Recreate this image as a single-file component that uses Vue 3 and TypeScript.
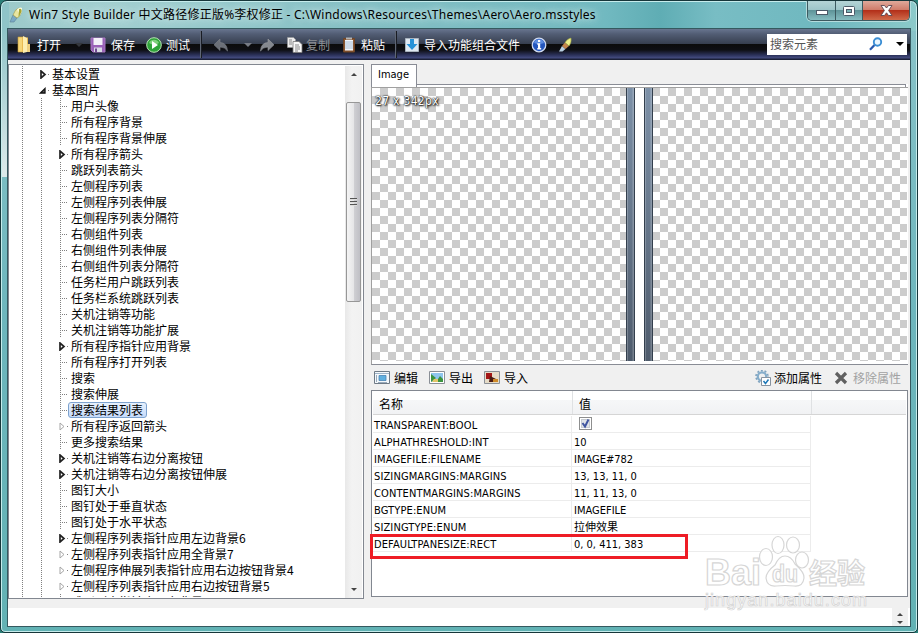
<script setup lang="ts">
type Kind = 'leaf' | 'full' | 'empty'
interface Node { label: string; kind: Kind; selected?: boolean }
interface Prop { name: string; value: string; check?: boolean }

const leaf = (label: string): Node => ({ label, kind: 'leaf' })
const full = (label: string): Node => ({ label, kind: 'full' })
const empty = (label: string): Node => ({ label, kind: 'empty' })

const nodes: Node[] = [
  leaf('用户头像'), leaf('所有程序背景'), leaf('所有程序背景伸展'), full('所有程序箭头'),
  leaf('跳跃列表箭头'), leaf('左侧程序列表'), leaf('左侧程序列表伸展'), leaf('左侧程序列表分隔符'),
  leaf('右侧组件列表'), leaf('右侧组件列表伸展'), leaf('右侧组件列表分隔符'),
  leaf('任务栏用户跳跃列表'), leaf('任务栏系统跳跃列表'), leaf('关机注销等功能'),
  leaf('关机注销等功能扩展'), full('所有程序指针应用背景'), leaf('所有程序打开列表'),
  leaf('搜索'), leaf('搜索伸展'), { label: '搜索结果列表', kind: 'leaf', selected: true },
  empty('所有程序返回箭头'), leaf('更多搜索结果'), full('关机注销等右边分离按钮'),
  full('关机注销等右边分离按钮伸展'), leaf('图钉大小'), leaf('图钉处于垂直状态'),
  leaf('图钉处于水平状态'), full('左侧程序列表指针应用左边背景6'),
  empty('左侧程序列表指针应用全背景7'), empty('左侧程序伸展列表指针应用右边按钮背景4'),
  empty('左侧程序列表指针应用右边按钮背景5'), leaf('跳跃列表指针应用右背景'),
]

const props: Prop[] = [
  { name: 'TRANSPARENT:BOOL', value: '', check: true },
  { name: 'ALPHATHRESHOLD:INT', value: '10' },
  { name: 'IMAGEFILE:FILENAME', value: 'IMAGE#782' },
  { name: 'SIZINGMARGINS:MARGINS', value: '13, 13, 11, 0' },
  { name: 'CONTENTMARGINS:MARGINS', value: '11, 11, 13, 0' },
  { name: 'BGTYPE:ENUM', value: 'IMAGEFILE' },
  { name: 'SIZINGTYPE:ENUM', value: '拉伸效果' },
  { name: 'DEFAULTPANESIZE:RECT', value: '0, 0, 411, 383' },
]
</script>

<template>
  <div class="window">
    <header class="titlebar">
      <svg class="app-icon" width="16" height="18" viewBox="0 0 16 18">
        <path d="M1 16 L4 9 L8 12 L5 16z" fill="#7aa9c4" stroke="#5d7f95" stroke-width=".6" />
        <path d="M4 9 Q6 3 10 2 L12 7 Q11 11 8 12z" fill="#e9e6a0" stroke="#93934a" stroke-width=".6" />
        <path d="M8 3.500 Q11 .5 13 2 Q13.500 6 11 9z" fill="#fdfde0" />
        <path d="M10 3 Q13 2 12.500 6 L9.500 11z" fill="#a6a432" />
      </svg>
      <h1>Win7 Style Builder 中文路径修正版%李权修正 - C:\Windows\Resources\Themes\Aero\Aero.msstyles</h1>
      <div class="caption">
        <span class="cap min"><svg width="12" height="6"><rect x=".5" y=".5" width="11" height="4" fill="#fff" stroke="#4c5a68" /></svg></span>
        <span class="cap max"><svg width="12" height="10"><rect x=".5" y=".5" width="11" height="9" rx="1" fill="#fff" stroke="#4c5a68" /><rect x="3.500" y="3.500" width="5" height="3" fill="#7cb4b8" stroke="#4c5a68" /></svg></span>
        <span class="cap close"><svg width="13" height="11" viewBox="0 0 13 11"><path d="M1 .5h3.500l2 2.500 2-2.500H12L8.600 5.500 12 10.500H8.500l-2-2.700-2 2.700H1l3.400-5z" fill="#fff" stroke="#5b4650" stroke-width=".9" /></svg></span>
      </div>
    </header>

    <div class="client">
      <nav class="toolbar">
        <span class="tool"><svg width="16" height="17" viewBox="0 0 16 17">
          <path d="M2 1h5v15H2z" fill="#f6d678" stroke="#c89b36" stroke-width=".6" /><path d="M6 1.500h6v14H6z" fill="#e9bb52" /><path d="M7 0l4 2v14l-4 1z" fill="#fdeeb0" /><path d="M11 8h3v8h-3z" fill="#efd080" />
        </svg><b>打开</b><i class="caret dim"></i></span>
        <span class="tool"><svg width="16" height="16" viewBox="0 0 16 16">
          <path d="M1 1h14v14H3L1 13z" fill="#9a62b8" stroke="#a678c0" /><path d="M3.500 1h9v7h-9z" fill="#f3f1f8" /><path d="M4 10.500h8V15H4z" fill="#d9dbe6" /><path d="M5 11.500h2V15H5z" fill="#6f4a90" />
        </svg><b>保存</b></span>
        <span class="tool test"><svg width="16" height="16" viewBox="0 0 16 16">
          <circle cx="8" cy="8" r="7.300" fill="#2fa339" stroke="#b7e2b5" /><path d="M3 6a5.500 5.500 0 0 1 10 0q-5 3-10 0z" fill="#7ed07b" /><path d="M6 4l6 4-6 4z" fill="#fff" />
        </svg><b>测试</b></span>
        <span class="sep"></span>
        <span class="tool"><svg width="16" height="14" viewBox="0 0 16 14"><path d="M7 1v3.500q7 .2 7.500 8.500-2.500-4-7.500-4v3.500L1 6.800z" fill="#6c7078" stroke="#83868d" stroke-width=".6" /></svg></span>
        <span class="tool"><i class="caret"></i></span>
        <span class="tool"><svg width="16" height="14" viewBox="0 0 16 14"><path d="M9 1v3.500Q2 4.700 1.500 13 4 9 9 9v3.500l6-5.700z" fill="#85898f" stroke="#9a9da3" stroke-width=".6" /></svg></span>
        <span class="tool copy"><svg width="16" height="16" viewBox="0 0 16 16">
          <path d="M.5.500h6l2 2v8h-8z" fill="#eee" stroke="#999" stroke-width=".6" /><path d="M6 4.500h6l3 3v8H6z" fill="#f8f8f8" stroke="#777" stroke-width=".8" /><path d="M2 3h3M2 5h3M2 7h3M8 8h4M8 10h5M8 12h5M8 14h3" stroke="#888" />
        </svg><b>复制</b></span>
        <span class="tool paste"><svg width="16" height="16" viewBox="0 0 16 16">
          <path d="M2.500 1.500h11V15h-11z" fill="#8a5630" stroke="#6e4426" /><path d="M4 3h8v10.500H4z" fill="#f2f6fb" /><path d="M5 0.500h6v2H5z" fill="#b4b4b4" /><path d="M4 5h8M4 7h8M4 9h8M4 11h8" stroke="#a9bdd2" />
        </svg><b>粘贴</b></span>
        <span class="sep"></span>
        <span class="tool import"><svg width="16" height="16" viewBox="0 0 16 16">
          <path d="M1.500 1.500h13v13h-13z" fill="#dfe9f2" stroke="#aab4be" /><path d="M6 2h4v5h3.500L8 13 2.500 7H6z" fill="#2692d8" />
        </svg><b>导入功能组合文件</b></span>
        <span class="tool"><svg width="16" height="16" viewBox="0 0 16 16">
          <circle cx="8" cy="8" r="6.800" fill="#2456bd" stroke="#cfdaf0" stroke-width="1.300" /><path d="M3 6a5.200 5.200 0 0 1 10 0q-5 2-10 0z" fill="#5c8ce0" /><path d="M7 3h2.200v2H7zM6.300 6.300h2.900v4.700h1V12.500H6.300V11H7V7.700h-.7z" fill="#fff" />
        </svg></span>
        <span class="tool"><svg width="16" height="16" viewBox="0 0 16 16">
          <path d="M1 14.500L4 9l3.500 3-3 2.500z" fill="#b9cfe0" /><path d="M4 9l3-3.500 4 3.500-3.500 3z" fill="#c4844c" /><path d="M7 5.500Q9.500 1.500 13 1q.8 4.500-2 8z" fill="#eef08a" stroke="#98a03c" stroke-width=".6" />
        </svg></span>
        <div class="search">
          <span>搜索元素</span>
          <svg width="14" height="14" viewBox="0 0 14 14"><path d="M1 12.800L5.500 8" stroke="#2758ae" stroke-width="2.200" /><circle cx="8.500" cy="5" r="3.700" fill="#eaf6ff" stroke="#3b8ed4" stroke-width="1.900" /></svg>
          <i class="caret black"></i>
        </div>
      </nav>

      <main class="body">
        <section class="tree">
          <ul>
            <li><span class="g wide v"></span><span class="g arrow"><svg width="8" height="9"><path d="M2 1v7l4-3.500z" fill="#fff" stroke="#222" stroke-width="1.700" /></svg><i class="dot"></i></span><em>基本设置</em></li>
            <li><span class="g wide v"></span><span class="g arrow"><svg width="8" height="9"><path d="M6 2.500v4.500H1.500z" fill="#666" stroke="#111" stroke-width="1.300" /></svg><i class="dot"></i></span><em>基本图片</em></li>
            <li v-for="n in nodes" :key="n.label">
              <span class="g wide v"></span><span class="g mid v"></span>
              <span v-if="n.kind === 'leaf'" class="g v branch"></span>
              <span v-else class="g arrow">
                <svg width="8" height="9"><path d="M2 1v7l4-3.500z" fill="#fff" :stroke="n.kind === 'full' ? '#222' : '#a6a6a6'" :stroke-width="n.kind === 'full' ? 1.7 : 1" /></svg><i class="dot"></i>
              </span>
              <em :class="{ selected: n.selected }">{{ n.label }}</em>
            </li>
          </ul>
          <div class="scroll">
            <i class="up"></i>
            <div class="thumb"><i></i><i></i><i></i></div>
            <i class="down"></i>
          </div>
        </section>

        <section class="right">
          <div class="tabs"><span class="tab">Image</span><span class="tabline"></span></div>
          <div class="preview">
            <span class="dims">27 x 342px</span>
            <div class="strip"><span></span><span></span></div>
          </div>
          <div class="actions">
            <span class="act"><svg width="16" height="13" viewBox="0 0 16 13"><path d="M.5.500h15v12H.5z" fill="#f4f8fb" stroke="#6e7a86" /><path d="M1 2.500h14" stroke="#9fb4c8" /><path d="M5 4.500h7v5H5z" fill="#5fb0e0" stroke="#4a84b4" stroke-width=".8" /><path d="M2.500 4v7M4 11.500h9" stroke="#9ab" /></svg>编辑</span>
            <span class="act"><svg width="16" height="13" viewBox="0 0 16 13"><path d="M.5.500h15v12H.5z" fill="#fff" stroke="#8a8f96" /><path d="M2 2h12v9H2z" fill="#8fc6ee" /><path d="M2 3l5 4-5 4zM7 11l4-6 3 3v3z" fill="#3c9440" /><path d="M5 8h4v3H3z" fill="#e2c668" /></svg>导出</span>
            <span class="act"><svg width="16" height="13" viewBox="0 0 16 13"><path d="M.5.500h15v12H.5z" fill="#e6dcc8" stroke="#8a8f96" /><path d="M2 2h6v6H2z" fill="#a31616" /><path d="M6 5l6 3-1 3H5z" fill="#4a1c14" /><path d="M9 8h5v3H9z" fill="#cf8a28" /></svg>导入</span>
            <span class="act add"><svg width="16" height="16" viewBox="0 0 16 16"><circle cx="7" cy="6.500" r="4.200" fill="none" stroke="#86aecb" stroke-width="2.200" /><circle cx="7" cy="6.500" r="6" fill="none" stroke="#7fa3bf" stroke-width="1.600" stroke-dasharray="2 1.770" /><path d="M6.500 7.500h9v8h-9z" fill="#fff" stroke="#8793a0" /><path d="M8.500 11l2 2.500 3-4" fill="none" stroke="#1d78b8" stroke-width="1.500" /></svg>添加属性</span>
            <span class="act off"><svg width="14" height="14" viewBox="0 0 14 14"><path d="M2 2l10 10M12 2L2 12" stroke="#606060" stroke-width="3.200" /></svg>移除属性</span>
          </div>
          <div class="grid">
            <div class="head"><span>名称</span><span>值</span><span></span></div>
            <div v-for="p in props" :key="p.name" class="row">
              <span class="name">{{ p.name }}</span>
              <span class="val"><svg v-if="p.check" width="13" height="13"><rect x=".5" y=".5" width="12" height="12" fill="#fff" stroke="#8e8f8f" /><rect x="2.500" y="2.500" width="8" height="8" fill="#dfe3e8" stroke="#c6cbd1" /><path d="M3.500 6l2.500 3.500L9.500 2.500" fill="none" stroke="#4156a0" stroke-width="2" /></svg>{{ p.value }}</span>
            </div>
            <div class="marker"></div>
          </div>
        </section>
      </main>
      <footer class="status"><div class="spin"><i class="up"></i><i class="down"></i></div></footer>
    </div>

    <div class="watermark">
      <svg width="170" height="66" viewBox="0 0 170 66">
        <g fill="#fff" fill-opacity=".75" stroke="#d6d6d6" stroke-width="1.200">
          <ellipse cx="61" cy="23" rx="6.500" ry="8.500" /><ellipse cx="73" cy="11" rx="6" ry="8.500" />
          <ellipse cx="88" cy="11" rx="6.500" ry="8" /><ellipse cx="97" cy="26" rx="6.500" ry="8" />
          <path d="M80 22q6 0 10 8 10 9 9 14-1 9-10 8-9-1-18 0-9 1-10-8 0-6 9-13 4-9 10-9z" />
          <text x="0" y="51" font-size="36" font-weight="bold" textLength="56" lengthAdjust="spacingAndGlyphs">Bai</text>
          <text x="67" y="48" font-size="23" font-weight="bold" textLength="26" lengthAdjust="spacingAndGlyphs">du</text>
          <text x="104" y="50" font-size="28" font-weight="bold" textLength="56" class="cjk">经验</text>
        </g>
        <text x="0" y="72" font-size="18" textLength="162" class="url">jingyan.baidu.com</text>
      </svg>
    </div>
  </div>
</template>

<style>
body { background: #2b7f78; overflow: hidden; }
</style>

<style scoped>
* { box-sizing: border-box; }
.window {
  position: relative; width: 918px; height: 633px; overflow: hidden;
  display: flex; flex-direction: column; padding: 0 7px 6px;
  border: 1px solid #16363a; border-radius: 7px 7px 5px 5px;
  box-shadow: inset 0 0 0 1px #c6ecec;
  background:
    linear-gradient(180deg, #8fc4c8 30px, #dce9ea 172px, #dce9ea 176px, transparent 176px) 0 0 / 8px 176px no-repeat,
    linear-gradient(90deg, #9ccaca, #a2cfd0 12%, #84bfc4 40%, #71b9c0 66%, #5fadb4 72%, #78bdc4 78%, #6fb8bf 90%, #8ccaca) 0 0 / 100% 30px no-repeat,
    linear-gradient(180deg, #8ac4c9, #6db6bd 50%, #62b2b4);
  font-family: "DejaVu Sans Condensed", "Noto Sans CJK SC", sans-serif;
  font-size: 12px; color: #000;
}
.titlebar { height: 28px; flex: none; display: flex; align-items: flex-start; }
.app-icon { margin: 5px 5px 0 1px; flex: none; }
h1 {
  margin: 3px 0 0 -1px; font: 12px/22px "Noto Sans", "Noto Sans CJK SC", sans-serif;
  white-space: nowrap; letter-spacing: .225px; color: #000;
  text-shadow: 0 0 6px #cfe8e8, 0 0 10px #cfe8e8;
}
.caption { margin: 0 0 0 auto; display: flex; height: 20px; border: 1px solid #3c5a60; border-top: 0; border-radius: 0 0 5px 5px; overflow: hidden; box-shadow: 0 0 0 1px #b5dcdd; }
.cap { display: flex; align-items: center; justify-content: center; width: 27px; border-right: 1px solid #3c5a60; background: linear-gradient(#b4d4d6, #9cc5c8 48%, #5f9499 50%, #86bcc0); }
.cap.min { width: 28px; padding-top: 5px; }
.cap.close { width: 46px; border: 0; background: linear-gradient(#dfa99b, #cf7a68 48%, #b3301a 50%, #cf6a4a); }
.client { flex: 1; display: flex; flex-direction: column; background: #f0f0f0; outline: 1px solid #35595f; min-height: 0; }
.toolbar {
  height: 31px; flex: none; padding-left: 8px; display: grid; align-items: center;
  grid-template-columns: 74px 56px 54px 13px 31px 15px 28px 54px 54px 9px 127px 27px 200px 1fr;
  background: linear-gradient(#68758f 0, #525d74 5px, #363e4e 15px, #0b0b0b 15px, #0e0f14 21px, #2b315a 26px, #444c80 29px, #1b2038 30px);
  color: #fff;
}
.tool { display: flex; align-items: center; gap: 5px; }
.tool b, .act { font: 12px/16px "Noto Sans CJK SC", sans-serif; white-space: nowrap; }
.tool b { padding-top: 1px; }
.tool.test, .tool.import, .tool.paste { gap: 4px; }
.tool.copy { gap: 3px; color: #8d9096; }
.sep { width: 2px; height: 27px; background: #5f6674; border-right: 1px solid #191c24; }
.caret { width: 0; height: 0; border: 4px solid transparent; border-top-color: #777b84; border-bottom: 0; }
.caret.dim { margin-left: 9px; border-top-color: #34373d; }
.caret.black { border-top-color: #000; }
.search { justify-self: end; width: 140px; height: 21px; margin: 0 3px 1px 0; background: #fff; color: #555; display: flex; align-items: center; padding: 0 3px; font: 12px/20px "Noto Sans CJK SC", sans-serif; }
.search svg { margin: 0 13px 0 auto; }
.body { flex: 1; display: flex; gap: 7px; padding: 4px 2px 0 0; min-height: 0; }
.tree { width: 356px; height: 535px; flex: none; border: 1px solid #828790; background: #fff; display: flex; padding: 1px 1px 0 0; }
ul { flex: 1; margin: 0; padding: 0; list-style: none; overflow: hidden; height: 531px; }
li { display: flex; height: 16px; }
.g { width: 17px; height: 16px; flex: none; background-repeat: no-repeat; }
.g.wide { width: 23px; }
.g.mid { width: 19px; }
.v { background-image: repeating-linear-gradient(180deg, #808080 0 1px, transparent 1px 2px); background-size: 1px 16px; background-position: 9px 0; }
.g.wide.v { background-position: 13px 0; }
.v.branch { background-image: repeating-linear-gradient(180deg, #808080 0 1px, transparent 1px 2px), repeating-linear-gradient(90deg, #808080 0 1px, transparent 1px 2px); background-size: 1px 16px, 8px 1px; background-position: 9px 0, 9px 8px; }
.g.arrow { display: flex; align-items: center; padding-left: 7px; }
.dot { width: 1px; height: 1px; background: #808080; margin-left: 1px; }
em { font: 12px/16px "Noto Sans CJK SC", sans-serif; padding: 0 3px; height: 16px; white-space: nowrap; }
em.selected { border: 1px solid #7da2ce; border-radius: 3px; padding: 0 3px 0 2px; line-height: 14px; background: linear-gradient(#e6f0fc, #c6dbfb); }
.scroll { width: 17px; height: 532px; display: flex; flex-direction: column; align-items: center; background: linear-gradient(90deg, #e8e8e8, #f3f3f3 40%, #f1f1f1); }
.up, .down { width: 0; height: 0; border: 4px solid transparent; }
.up { border-top: 0; border-bottom-color: #444; }
.down { border-bottom: 0; border-top-color: #444; }
.scroll .up, .scroll .down { border-left-width: 3px; border-right-width: 3px; }
.scroll .up { margin-top: 7px; border-bottom-width: 3px; }
.scroll .down { margin: auto 0 7px; border-top-width: 3px; }
.thumb { margin-top: 26px; width: 15px; height: 200px; border: 1px solid #979797; border-radius: 2px; background: linear-gradient(90deg, #f4f4f4, #e6e6e8 50%, #cfcfd3 55%, #bfbfc5); display: flex; flex-direction: column; align-items: center; justify-content: center; gap: 1px; }
.thumb i { width: 7px; height: 2px; background: linear-gradient(#555 1px, #ddd 1px); }
.right { flex: 1; min-width: 0; display: flex; flex-direction: column; }
.tabs { height: 23px; display: flex; align-items: flex-end; border-left: 1px solid #898c95; padding-right: 2px; background: linear-gradient(#fff, #fff) 0 100% / 100% 3px no-repeat; }
.tab { height: 23px; width: 45px; border: 1px solid #898c95; border-width: 1px 1px 0 0; background: #fff; font: 11px/19px "DejaVu Sans Condensed", sans-serif; padding-left: 6px; align-self: flex-start; }
.tabline { flex: 1; height: 3px; border: 1px solid #898c95; border-width: 1px 1px 0 0; }
.preview { position: relative; height: 278px; border: 1px solid #a0a0a0; border-right: 0; border-bottom-color: #898c95; padding: 0 1px 3px 0; background: repeating-conic-gradient(#ccc 0 25%, #fff 0 50%) 0 0 / 16px 16px content-box, #fff; display: flex; }
.dims { position: absolute; left: 3px; top: 5px; font: 12px/16px "DejaVu Sans Condensed", sans-serif; letter-spacing: .3px; color: #fff; text-shadow: 0 0 2px #000, 1px 1px 2px #000, 0 0 1px #000; }
.strip { width: 27px; margin-left: 254px; background: #fff; display: flex; justify-content: space-between; }
.strip span { width: 9px; border: 1px solid #333f4d; border-width: 0 1px; background: linear-gradient(90deg, rgba(255,255,255,.22) 1px, transparent 1px 5px, rgba(255,255,255,.22) 6px), linear-gradient(#7d91a8, #4e5b6c); }
.actions { height: 25px; flex: none; display: flex; align-items: center; padding: 1px 7px 1px 3px; gap: 11px; }
.act { display: flex; align-items: center; gap: 4px; }
.add { margin-left: auto; gap: 3px; }
.off { color: #a2a2a2; gap: 5px; margin-left: 1px; }
.grid { position: relative; height: 207px; border: 1px solid #828790; background: #fff; font-size: 11px; }
.head { height: 24px; display: grid; grid-template-columns: 200px 239px 1fr; margin: 0 1px 1px; border-bottom: 1px solid #d5d5d5; background: linear-gradient(#fff 9px, #f6f7f8 9px, #f1f2f4); font: 12px/26px "Noto Sans CJK SC", sans-serif; }
.head span { padding-left: 6px; height: 23px; border-right: 1px solid #dfe1e3; }
.head span:last-child { border: 0; }
.row { height: 17px; width: 438px; margin-left: 1px; display: grid; grid-template-columns: 199px 239px; line-height: 19px; letter-spacing: .12px; }
.row span { border: 1px solid #ececec; border-width: 0 1px 1px 0; padding-left: 1px; white-space: nowrap; height: 17px; }
.row .val { padding-left: 2px; letter-spacing: 0; }
.row svg { display: block; margin: 1px 0 0 5px; }
.marker { position: absolute; left: -2px; top: 143px; width: 318px; height: 25px; border: 3px solid #ee1c25; }
.status { height: 18px; flex: none; background: #fff; display: flex; justify-content: flex-end; }
.spin { width: 16px; background: #f0f0f0; display: flex; flex-direction: column; align-items: center; justify-content: space-between; padding: 5px 0 2px; margin-right: 2px; }
.spin i { border-width: 3px; }
.spin .up { border-top: 0; } .spin .down { border-bottom: 0; }
.watermark { position: absolute; left: 704px; top: 533px; }
.watermark svg { overflow: visible; font-family: "Liberation Sans", sans-serif; }
.cjk { font-family: "Noto Sans CJK SC", sans-serif; }
.url { fill: #fff; stroke: #d2d2d2; stroke-width: .7; }
</style>
